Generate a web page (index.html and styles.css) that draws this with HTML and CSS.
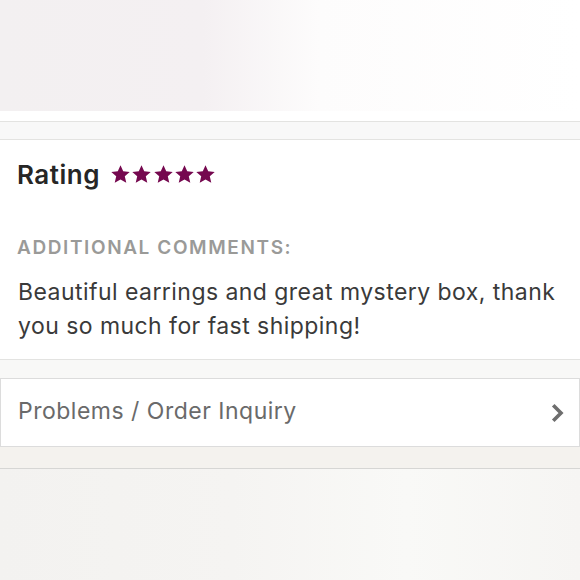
FILE: index.html
```html
<!DOCTYPE html>
<html lang="en">
<head>
<meta charset="utf-8">
<title>Review</title>
<link rel="stylesheet" href="styles.css">
</head>
<body>
<div class="page">
  <div class="hero"></div>
  <div class="gap-white"></div>
  <div class="band"></div>
  <section class="card">
    <div class="rating-row">
      <h2 class="rating-title">Rating</h2>
      <div class="stars">
        <svg class="star" viewBox="0 0 24 24"><path d="M12 1.5l3.1 6.9 7.4.7-5.6 5 1.7 7.4L12 17.6 5.4 21.5l1.7-7.4-5.6-5 7.4-.7z"/></svg>
        <svg class="star" viewBox="0 0 24 24"><path d="M12 1.5l3.1 6.9 7.4.7-5.6 5 1.7 7.4L12 17.6 5.4 21.5l1.7-7.4-5.6-5 7.4-.7z"/></svg>
        <svg class="star" viewBox="0 0 24 24"><path d="M12 1.5l3.1 6.9 7.4.7-5.6 5 1.7 7.4L12 17.6 5.4 21.5l1.7-7.4-5.6-5 7.4-.7z"/></svg>
        <svg class="star" viewBox="0 0 24 24"><path d="M12 1.5l3.1 6.9 7.4.7-5.6 5 1.7 7.4L12 17.6 5.4 21.5l1.7-7.4-5.6-5 7.4-.7z"/></svg>
        <svg class="star" viewBox="0 0 24 24"><path d="M12 1.5l3.1 6.9 7.4.7-5.6 5 1.7 7.4L12 17.6 5.4 21.5l1.7-7.4-5.6-5 7.4-.7z"/></svg>
      </div>
    </div>
    <h3 class="label">ADDITIONAL COMMENTS:</h3>
    <p class="comment">Beautiful earrings and great mystery box, thank you so much for fast shipping!</p>
  </section>
  <div class="band band-mid"></div>
  <a class="inquiry" href="#">
    <span class="inquiry-text">Problems / Order Inquiry</span>
    <svg class="chevron" viewBox="0 0 14 20"><path d="M3.5 3.5l6.5 6.5-6.5 6.5" fill="none" stroke="#6e6e6e" stroke-width="3.6" stroke-linecap="square" stroke-linejoin="miter"/></svg>
  </a>
  <div class="band band-bottom"></div>
  <div class="footer-fade"></div>
</div>
</body>
</html>
```
FILE: styles.css
```css
* { box-sizing: border-box; }
html, body { margin: 0; padding: 0; }
body {
  font-family: "Inter", "Liberation Sans", sans-serif;
  background: #f5f4f1;
  width: 580px;
  height: 580px;
  overflow: hidden;
  font-variant-ligatures: none;
}
.page { display: flex; flex-direction: column; }
.hero {
  height: 111px;
  background: linear-gradient(90deg, #f3f0f1 0%, #f4f0f2 35%, #fdfcfc 55%, #ffffff 100%);
}
.gap-white { height: 10px; background: #fff; }
.band {
  height: 19px;
  background: #f8f8f8;
  border-top: 1px solid #e3e3e1;
  border-bottom: 1px solid #e3e3e1;
}
.card {
  background: #fff;
  padding: 19px 18px 0 17px;
  height: 219px;
}
.rating-row { display: flex; align-items: center; gap: 10px; height: 30px; }
.rating-title {
  margin: 0;
  font-size: 26px;
  font-weight: 600;
  color: #262626;
  letter-spacing: 0.5px;
}
.stars { display: flex; gap: 0.3px; }
.star { width: 21px; height: 21px; fill: #75084f; }
.label {
  margin: 47px 0 0 0;
  font-size: 19px;
  font-weight: 600;
  color: #9a9a98;
  letter-spacing: 1.6px;
}
.comment {
  margin: 16px 0 0 1px;
  font-size: 23px;
  line-height: 34px;
  color: #3a3a3a;
  letter-spacing: 0.45px;
}
.band-mid {
  height: 19px;
  background: #f8f8f7;
  border-bottom: none;
  border-top: 1px solid #e3e3e1;
}
.inquiry {
  display: flex;
  align-items: center;
  justify-content: space-between;
  height: 69px;
  background: #fff;
  border: 1px solid #dcdcdc;
  padding: 0 14px 0 17px;
  text-decoration: none;
}
.inquiry-text { font-size: 23px; color: #6a6a6a; margin-top: -3px; letter-spacing: 0.5px; }
.chevron { width: 14px; height: 20px; }
.band-bottom {
  height: 22px;
  background: #f4f2ee;
  border-top: none;
  border-bottom: 1px solid #d6d6d4;
}
.footer-fade {
  height: 112px;
  background: linear-gradient(90deg, #f3f2f0 0%, #f5f4f2 40%, #f9f9f7 70%, #f6f5f3 100%);
}
```
